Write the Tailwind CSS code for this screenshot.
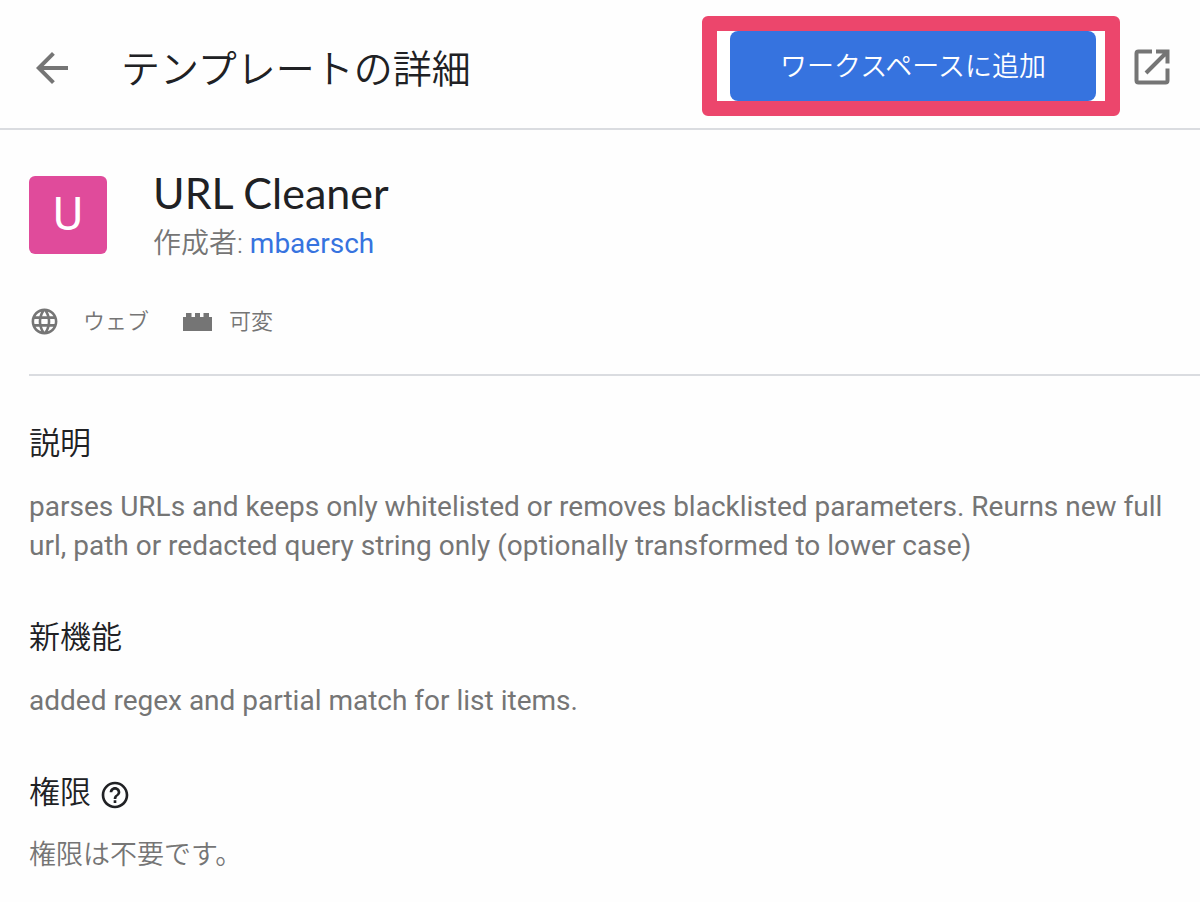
<!DOCTYPE html>
<html lang="ja">
<head>
  <meta charset="UTF-8" />
  <meta name="viewport" content="width=device-width, initial-scale=1.0" />
  <title>テンプレートの詳細</title>

  <!-- Tailwind CSS CDN -->
  <script src="https://cdn.jsdelivr.net/npm/@tailwindcss/browser@4"></script>
</head>
<body class="bg-[#fefefe] font-['Roboto','Noto_Sans_CJK_JP',sans-serif] text-[28px] leading-[39px] text-[#757575]">

  <!-- Header -->
  <header class="flex items-center h-[130px] pt-1 pl-7 pr-6 border-b-2 border-[#dadce0]">
    <div class="flex items-center gap-[45px] pt-1">
      <button type="button" aria-label="戻る" class="shrink-0">
        <svg class="size-12" viewBox="0 0 24 24" fill="currentColor"><path d="M20 11H7.830l5.590-5.590L12 4l-8 8 8 8 1.410-1.410L7.830 13H20v-2z"/></svg>
      </button>
      <h1 class="pt-1 text-[39px] leading-[58px] font-[350] text-[#202124] whitespace-nowrap">テンプレートの詳細</h1>
    </div>

    <div class="ml-auto shrink-0 flex items-center gap-2">
      <div class="border-[15px] border-[#ec466c] rounded-md bg-white pl-[13px] pr-[9px]">
        <button type="button" class="block h-[70px] px-[50px] pt-0.5 rounded-lg bg-[#3673df] text-white text-[27px] font-[350] whitespace-nowrap">ワークスペースに追加</button>
      </div>
      <a href="#" aria-label="新しいタブで開く" class="block pt-0.5">
        <svg class="size-12" viewBox="0 0 48 48" fill="none" stroke="currentColor" stroke-width="4"><path d="M24 8.500H10.500a2 2 0 0 0-2 2v27a2 2 0 0 0 2 2h27a2 2 0 0 0 2-2V25.500M28 8.500h13.500M39.500 7v13.500M39 9 18 30"/></svg>
      </a>
    </div>
  </header>

  <main class="pl-[29px]">
    <!-- Template name -->
    <section class="flex items-center gap-[46px] pt-9">
      <div class="flex items-center justify-center size-[78px] shrink-0 rounded-md bg-[#e04b9b] text-white text-[46px]">U</div>
      <div>
        <h2 class="text-[43px] leading-[54px] text-[#202124] font-['Lato',sans-serif]">URL Cleaner</h2>
        <p class="mt-1"><span class="font-[350]">作成者:</span> <a href="#" class="text-[#3673df]">mbaersch</a></p>
      </div>
    </section>

    <!-- Type -->
    <ul class="flex items-center mt-[39px] pb-[33px] border-b-2 border-[#dadce0] text-[22px] font-[350]">
      <li class="flex items-center">
        <svg class="size-[31px]" viewBox="0 0 24 24" fill="currentColor"><path d="M11.990 2C6.470 2 2 6.480 2 12s4.470 10 9.990 10C17.520 22 22 17.520 22 12S17.520 2 11.990 2zm6.930 6h-2.950c-.32-1.250-.78-2.450-1.380-3.560 1.840.63 3.370 1.910 4.330 3.560zM12 4.040c.83 1.200 1.480 2.530 1.910 3.960h-3.820c.43-1.430 1.080-2.760 1.910-3.960zM4.260 14C4.100 13.360 4 12.690 4 12s.1-1.360.26-2h3.380c-.08.66-.14 1.320-.14 2s.06 1.340.14 2H4.260zm.82 2h2.950c.32 1.250.78 2.450 1.380 3.560-1.840-.63-3.370-1.900-4.330-3.560zm2.950-8H5.080c.96-1.660 2.490-2.930 4.330-3.560C8.810 5.550 8.350 6.750 8.030 8zM12 19.960c-.83-1.200-1.480-2.530-1.910-3.960h3.820c-.43 1.430-1.080 2.760-1.910 3.960zM14.340 14H9.660c-.09-.66-.16-1.320-.16-2s.07-1.350.16-2h4.680c.09.65.16 1.320.16 2s-.07 1.340-.16 2zm.25 5.560c.6-1.110 1.060-2.310 1.380-3.560h2.950c-.96 1.650-2.490 2.930-4.330 3.560zM16.360 14c.08-.66.14-1.320.14-2s-.06-1.340-.14-2h3.380c.16.64.26 1.310.26 2s-.1 1.360-.26 2h-3.380z"/></svg>
        <span class="ml-[23px]">ウェブ</span>
      </li>
      <li class="flex items-center ml-[34px]">
        <svg class="w-[29px] h-[18px]" viewBox="0 0 29 18" fill="currentColor"><path d="M0 4h3V0h5.500v4h3.500V0h5v4h3.500V0H26v4h3v14H0z"/></svg>
        <span class="ml-[17px]">可変</span>
      </li>
    </ul>

    <!-- Description -->
    <section class="pt-[45px] pr-6">
      <h3 class="text-[31px] leading-[46px] font-[350] text-[#202124]">説明</h3>
      <p class="mt-5">parses URLs and keeps only whitelisted or removes blacklisted parameters. Reurns new full url, path or redacted query string only (optionally transformed to lower case)</p>
    </section>

    <!-- What's new -->
    <section class="pt-[50px] pr-6">
      <h3 class="text-[31px] leading-[46px] font-[350] text-[#202124]">新機能</h3>
      <p class="mt-5">added regex and partial match for list items.</p>
    </section>

    <!-- Permissions -->
    <section class="pt-[50px] pr-6">
      <h3 class="flex items-center gap-2 text-[31px] leading-[46px] font-[350] text-[#202124]">
        権限
        <svg class="size-8 mt-1" viewBox="0 0 24 24" fill="currentColor"><path d="M11 18h2v-2h-2v2zm1-16C6.480 2 2 6.480 2 12s4.480 10 10 10 10-4.480 10-10S17.520 2 12 2zm0 18c-4.410 0-8-3.590-8-8s3.590-8 8-8 8 3.590 8 8-3.590 8-8 8zm0-14c-2.210 0-4 1.790-4 4h2c0-1.100.9-2 2-2s2 .9 2 2c0 2-3 1.750-3 5h2c0-2.250 3-2.500 3-5 0-2.210-1.790-4-4-4z"/></svg>
      </h3>
      <p class="mt-5 text-[27px] font-[350]">権限は不要です。</p>
    </section>
  </main>

</body>
</html>
